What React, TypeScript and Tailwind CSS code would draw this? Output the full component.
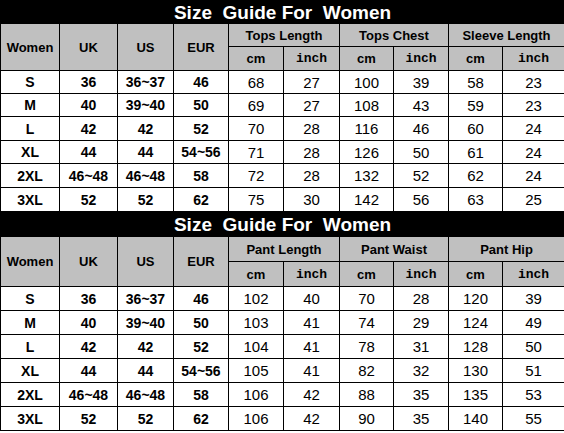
import React from 'react';

type Row = { size: string; uk: string; us: string; eur: string; vals: string[] };

const sizes = [
  { size: 'S', uk: '36', us: '36~37', eur: '46' },
  { size: 'M', uk: '40', us: '39~40', eur: '50' },
  { size: 'L', uk: '42', us: '42', eur: '52' },
  { size: 'XL', uk: '44', us: '44', eur: '54~56' },
  { size: '2XL', uk: '46~48', us: '46~48', eur: '58' },
  { size: '3XL', uk: '52', us: '52', eur: '62' },
];

const topsVals = [
  ['68', '27', '100', '39', '58', '23'],
  ['69', '27', '108', '43', '59', '23'],
  ['70', '28', '116', '46', '60', '24'],
  ['71', '28', '126', '50', '61', '24'],
  ['72', '28', '132', '52', '62', '24'],
  ['75', '30', '142', '56', '63', '25'],
];

const pantVals = [
  ['102', '40', '70', '28', '120', '39'],
  ['103', '41', '74', '29', '124', '49'],
  ['104', '41', '78', '31', '128', '50'],
  ['105', '41', '82', '32', '130', '51'],
  ['106', '42', '88', '35', '135', '53'],
  ['106', '42', '90', '35', '140', '55'],
];

const colClasses = [
  'w-[59px]', 'w-[58px]', 'w-[56px]', 'w-[55px]', 'w-[55px]',
  'w-[56px]', 'w-[54px]', 'w-[55px]', 'w-[54px]', 'w-[62px]',
];

const sans = "font-['Liberation_Sans',Arial,sans-serif]";
const mono = "font-['Liberation_Mono','Courier_New',monospace]";
const headCell = 'bg-[#c0c0c0] border border-black p-0 text-[13px] leading-none font-bold';

function SizeTable({
  groups,
  vals,
  titleH,
  headH,
  rowHs,
}: {
  groups: string[];
  vals: string[][];
  titleH: string;
  headH: [string, string];
  rowHs: string[];
}) {
  const rows: Row[] = sizes.map((s, i) => ({ ...s, vals: vals[i] }));
  return (
    <table className={`w-[564px] table-fixed border-collapse text-black ${sans}`}>
      <colgroup>
        {colClasses.map((c, i) => (
          <col key={i} className={c} />
        ))}
      </colgroup>
      <thead>
        <tr className={titleH}>
          <th
            colSpan={10}
            className="bg-black border border-black p-0 text-center text-[19px] leading-none font-bold text-white whitespace-pre"
          >
            {'Size  Guide For  Women'}
          </th>
        </tr>
        <tr className={headH[0]}>
          {['Women', 'UK', 'US', 'EUR'].map((h) => (
            <th key={h} rowSpan={2} className={headCell}>
              {h}
            </th>
          ))}
          {groups.map((g) => (
            <th key={g} colSpan={2} className={headCell}>
              {g}
            </th>
          ))}
        </tr>
        <tr className={headH[1]}>
          {groups.map((g) => (
            <React.Fragment key={g}>
              <th className={headCell}>cm</th>
              <th className={`${headCell} ${mono}`}>inch</th>
            </React.Fragment>
          ))}
        </tr>
      </thead>
      <tbody>
        {rows.map((r, i) => (
          <tr key={r.size} className={rowHs[i]}>
            {[r.size, r.uk, r.us, r.eur].map((v, j) => (
              <td key={j} className="bg-white border border-black p-0 text-center text-[14px] leading-none font-bold">
                {v}
              </td>
            ))}
            {r.vals.map((v, j) => (
              <td key={`v${j}`} className="bg-white border border-black p-0 text-center text-[15px] leading-none">
                {v}
              </td>
            ))}
          </tr>
        ))}
      </tbody>
    </table>
  );
}

export default function App() {
  return (
    <div className="w-[564px] h-[433px] bg-white overflow-hidden">
      <SizeTable
        groups={['Tops Length', 'Tops Chest', 'Sleeve Length']}
        vals={topsVals}
        titleH="h-[23px]"
        headH={['h-[23px]', 'h-[24px]']}
        rowHs={['h-[23px]', 'h-[23px]', 'h-[24px]', 'h-[23px]', 'h-[24px]', 'h-[24px]']}
      />
      <SizeTable
        groups={['Pant Length', 'Pant Waist', 'Pant Hip']}
        vals={pantVals}
        titleH="h-[24px]"
        headH={['h-[25px]', 'h-[25px]']}
        rowHs={['h-[24px]', 'h-[24px]', 'h-[24px]', 'h-[24px]', 'h-[24px]', 'h-[24px]']}
      />
    </div>
  );
}
